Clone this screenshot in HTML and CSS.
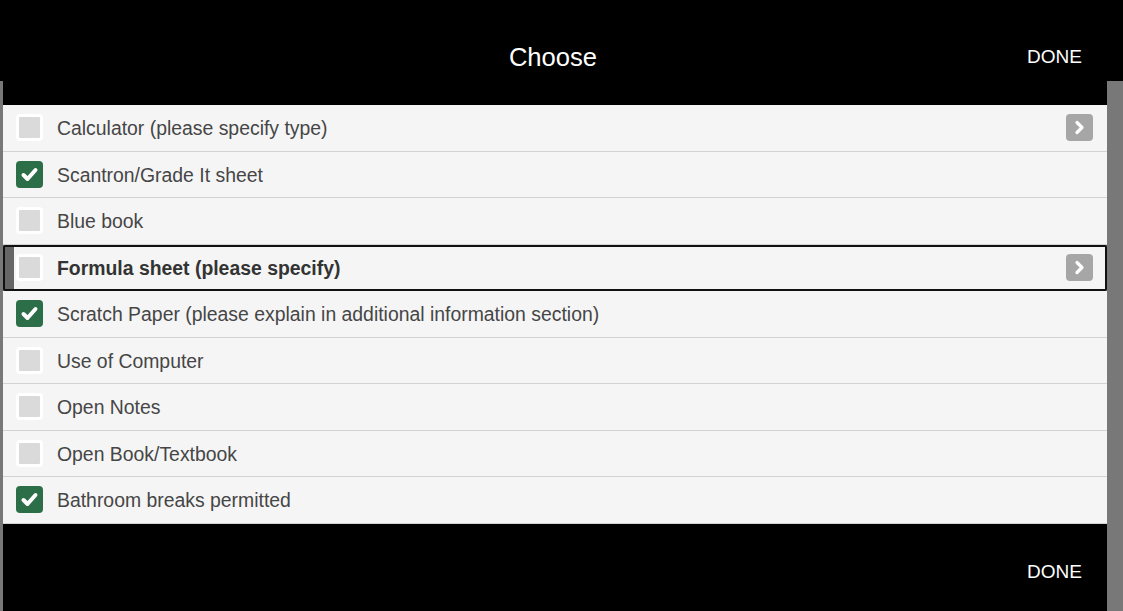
FILE: index.html
```html
<!DOCTYPE html>
<html lang="en">
<head>
<meta charset="utf-8">
<title>Choose</title>
<link rel="stylesheet" href="styles.css">
</head>
<body>
<div class="modal">
  <header class="bar bar-top">
    <span></span>
    <h1 class="title">Choose</h1>
    <span class="done">DONE</span>
  </header>
  <ul class="list">
    <li class="row">
      <span class="box"></span>
      <span class="label">Calculator (please specify type)</span>
      <span class="more"><svg viewBox="0 0 27 27" width="27" height="27"><path d="M11 8.5 L16 13.5 L11 18.5" fill="none" stroke="#fff" stroke-width="3.2" stroke-linecap="round" stroke-linejoin="round"/></svg></span>
    </li>
    <li class="row">
      <span class="box checked"><svg viewBox="0 0 27 27" width="27" height="27"><path d="M7.5 14 L11.5 18 L19.5 9" fill="none" stroke="#fff" stroke-width="4" stroke-linecap="round" stroke-linejoin="round"/></svg></span>
      <span class="label">Scantron/Grade It sheet</span>
    </li>
    <li class="row">
      <span class="box"></span>
      <span class="label">Blue book</span>
    </li>
    <li class="row active">
      <span class="box"></span>
      <span class="label">Formula sheet (please specify)</span>
      <span class="more"><svg viewBox="0 0 27 27" width="27" height="27"><path d="M11 8.5 L16 13.5 L11 18.5" fill="none" stroke="#fff" stroke-width="3.2" stroke-linecap="round" stroke-linejoin="round"/></svg></span>
    </li>
    <li class="row">
      <span class="box checked"><svg viewBox="0 0 27 27" width="27" height="27"><path d="M7.5 14 L11.5 18 L19.5 9" fill="none" stroke="#fff" stroke-width="4" stroke-linecap="round" stroke-linejoin="round"/></svg></span>
      <span class="label">Scratch Paper (please explain in additional information section)</span>
    </li>
    <li class="row">
      <span class="box"></span>
      <span class="label">Use of Computer</span>
    </li>
    <li class="row">
      <span class="box"></span>
      <span class="label">Open Notes</span>
    </li>
    <li class="row">
      <span class="box"></span>
      <span class="label">Open Book/Textbook</span>
    </li>
    <li class="row">
      <span class="box checked"><svg viewBox="0 0 27 27" width="27" height="27"><path d="M7.5 14 L11.5 18 L19.5 9" fill="none" stroke="#fff" stroke-width="4" stroke-linecap="round" stroke-linejoin="round"/></svg></span>
      <span class="label">Bathroom breaks permitted</span>
    </li>
  </ul>
  <footer class="bar bar-bottom">
    <span class="done">DONE</span>
  </footer>
</div>
</body>
</html>
```

FILE: styles.css
```css
* { box-sizing: border-box; }
html, body { margin: 0; padding: 0; }
body {
  height: 611px;
  overflow: hidden;
  background: linear-gradient(to bottom, #000 0, #000 81px, #787878 81px);
  font-family: "Liberation Sans", Arial, sans-serif;
  display: flex;
}
.modal {
  margin-left: 3px;
  width: 1104px;
  height: 611px;
  display: flex;
  flex-direction: column;
}
.bar {
  background: #000;
  color: #fff;
}
.bar-top {
  height: 105px;
  display: grid;
  grid-template-columns: 1fr auto 1fr;
  align-items: start;
}
.title {
  margin: 0;
  padding-top: 42px;
  font-weight: normal;
  font-size: 25.6px;
  line-height: 30px;
  margin-right: 4px;
}
.done {
  font-size: 19px;
  line-height: 22px;
  justify-self: end;
}
.bar-top .done { padding: 46px 25px 0 0; }
.bar-bottom {
  flex: 1;
  display: flex;
  justify-content: flex-end;
  padding: 37px 25px 0 0;
}
.list {
  list-style: none;
  margin: 0;
  padding: 0;
}
.row {
  height: 46.5px;
  background: #f5f5f5;
  border-bottom: 1px solid #d2d2d2;
  display: flex;
  align-items: center;
  padding: 0 14px 0 13px;
  font-size: 19.4px;
  color: #464646;
}
.row.active {
  border: 2px solid #111;
  border-radius: 2px;
  box-shadow: inset 9px 0 0 #666;
  padding: 0 12px 0 11px;
  font-weight: bold;
  color: #333;
}
.box {
  width: 27px;
  height: 27px;
  flex: none;
  border-radius: 4px;
  border: 3px solid #fff;
  background: #dadada;
  margin-right: 14px;
}
.box.checked {
  border: none;
  background: #2b6e47;
}
.box svg { display: block; }
.label { flex: 1; white-space: nowrap; padding-top: 2px; }
.more {
  width: 27px;
  height: 27px;
  flex: none;
  border-radius: 4px;
  background: #a6a6a6;
}
.more svg { display: block; }
```
